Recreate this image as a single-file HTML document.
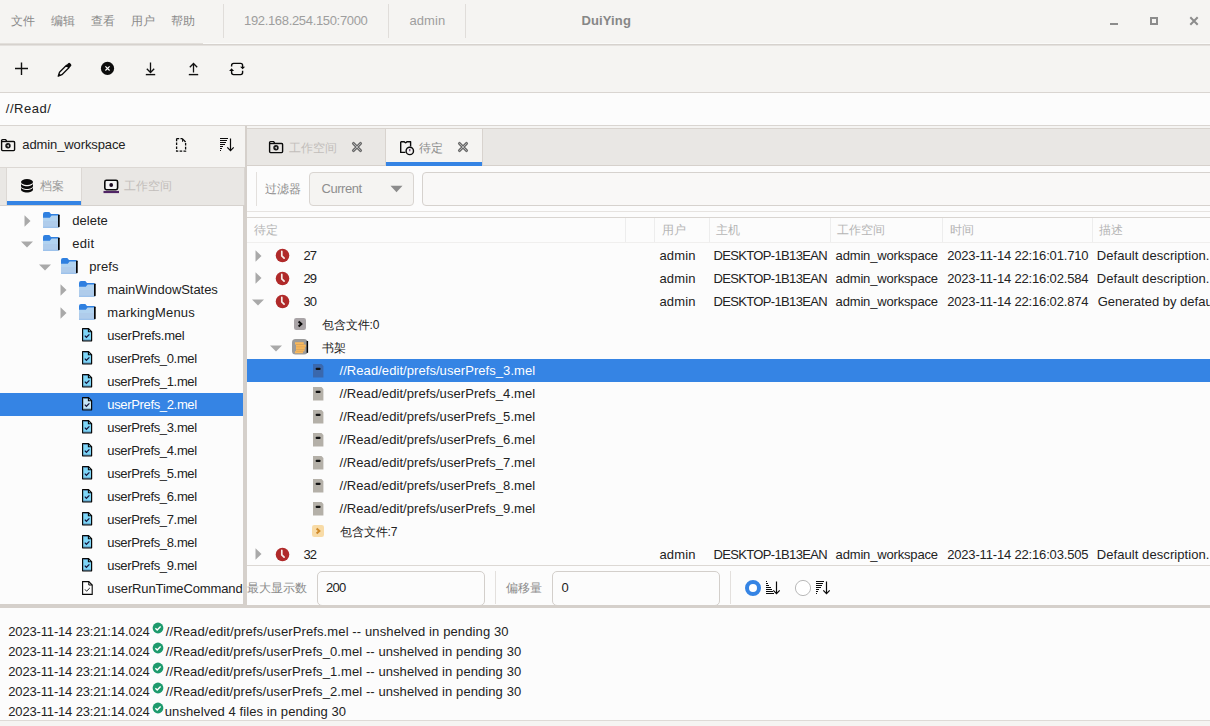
<!DOCTYPE html>
<html><head><meta charset="utf-8"><style>
html,body{margin:0;padding:0;width:1210px;height:726px;overflow:hidden;background:#f5f4f2;font-family:'Liberation Sans',sans-serif;}
.t{position:absolute;white-space:pre;}
svg{overflow:visible}
</style></head><body>
<div style="position:absolute;left:0px;top:0px;width:1210px;height:44px;background:#f5f4f2;"></div><div style="position:absolute;left:0px;top:43px;width:203px;height:1px;background:#e2dfdb;"></div><div style="position:absolute;left:203px;top:43px;width:1007px;height:1px;background:#fafaf9;"></div><div style="position:absolute;left:0px;top:44px;width:1210px;height:1px;background:#d6d2ce;"></div><div style="position:absolute;left:223px;top:4px;width:1px;height:34px;background:#e0ddda;"></div><div style="position:absolute;left:388px;top:4px;width:1px;height:34px;background:#e0ddda;"></div><div style="position:absolute;left:465px;top:4px;width:1px;height:34px;background:#e0ddda;"></div><div style="position:absolute;left:1110px;top:23px;width:8px;height:2px;background:#8c8c8c;"></div><div style="position:absolute;left:1150px;top:17px;width:4px;height:4px;border:2px solid #8c8c8c"></div><svg style="position:absolute;left:1189px;top:16px;" width="10" height="10" viewBox="0 0 10 10"><path d="M1.3 1.3L8.7 8.7M8.7 1.3L1.3 8.7" stroke="#8c8c8c" stroke-width="2"/></svg><div style="position:absolute;left:0px;top:45px;width:1210px;height:47px;background:#f5f4f2;"></div><div style="position:absolute;left:0px;top:45px;width:1210px;height:1px;background:#e4e1de;"></div><div style="position:absolute;left:0px;top:92px;width:1210px;height:1px;background:#d9d5d1;"></div><svg style="position:absolute;left:14px;top:61px;" width="15" height="15" viewBox="0 0 15 15"><path d="M7.5 1.5V14M1 7.5H14" stroke="#111" stroke-width="1.4"/></svg><svg style="position:absolute;left:57px;top:62px;" width="16" height="16" viewBox="0 0 16 16"><path d="M1.2 14.2L2.5 10.3L9.5 3.3L11.9 5.7L4.9 12.7Z" fill="none" stroke="#0a0a0a" stroke-width="1.25" stroke-linejoin="round"/><path d="M9 3.4L11 1.4Q12.1 0.3 13.3 1.4L13.9 2Q15 3.2 13.9 4.3L11.9 6.3Z" fill="#0a0a0a"/><path d="M1.2 14.2L2 11.2L4.2 13.4Z" fill="#0a0a0a"/></svg><svg style="position:absolute;left:100px;top:61px;" width="15" height="15" viewBox="0 0 15 15"><circle cx="7.5" cy="7.4" r="6.6" fill="#0c0c0c"/><path d="M5.4 5.3L9.6 9.5M9.6 5.3L5.4 9.5" stroke="#fff" stroke-width="1.15"/></svg><svg style="position:absolute;left:145px;top:62px;" width="11" height="14" viewBox="0 0 11 14"><path d="M5.5 0.5V10.5M1.8 6.8L5.5 10.5L9.2 6.8" fill="none" stroke="#111" stroke-width="1.3"/><path d="M0.8 12.6H10.2" stroke="#111" stroke-width="1.4"/></svg><svg style="position:absolute;left:188px;top:62px;" width="11" height="14" viewBox="0 0 11 14"><path d="M5.5 10.6V1.5M1.8 5.2L5.5 1.5L9.2 5.2" fill="none" stroke="#111" stroke-width="1.3"/><path d="M0.8 12.6H10.2" stroke="#111" stroke-width="1.4"/></svg><svg style="position:absolute;left:228px;top:61px;" width="18" height="15" viewBox="0 0 18 15"><path d="M3.6 5.6V4.4Q3.6 2.4 5.6 2.4H12.6Q14.6 2.4 14.6 4.4V6M14.6 9.8V11.6Q14.6 13.6 12.6 13.6H5.6Q3.6 13.6 3.6 11.6V9.6" fill="none" stroke="#0a0a0a" stroke-width="1.4"/><path d="M12.1 5.7H17.1L14.6 8.3Z" fill="#0a0a0a"/><path d="M1.1 10.1H6.1L3.6 7.2Z" fill="#0a0a0a"/></svg><div style="position:absolute;left:0px;top:93px;width:1210px;height:32px;background:#fcfcfc;"></div><div style="position:absolute;left:0px;top:125px;width:1210px;height:1px;background:#d9d5d1;"></div><div style="position:absolute;left:0px;top:126px;width:245px;height:41px;background:#f5f4f2;"></div><div style="position:absolute;left:0px;top:167px;width:244px;height:1px;background:#dcd8d4;"></div><div style="position:absolute;left:0px;top:168px;width:244px;height:37px;background:#e9e7e4;"></div><div style="position:absolute;left:6px;top:168px;width:1px;height:37px;background:#dcd8d4;"></div><div style="position:absolute;left:7px;top:168px;width:74px;height:33px;background:#f5f4f2;"></div><div style="position:absolute;left:81px;top:168px;width:1px;height:37px;background:#dcd8d4;"></div><div style="position:absolute;left:7px;top:201px;width:74px;height:4px;background:#3584e4;"></div><div style="position:absolute;left:0px;top:205px;width:244px;height:1px;background:#d6d2ce;"></div><div style="position:absolute;left:0px;top:206px;width:243px;height:398px;background:#fcfcfc;"></div><svg style="position:absolute;left:0px;top:138px;" width="17" height="16" viewBox="0 0 17 16"><path d="M1.6 4.5V2.6Q1.6 1.6 2.6 1.6H5.6L6.8 3.4H13.6Q14.6 3.4 14.6 4.4V11.6Q14.6 12.6 13.6 12.6H2.6Q1.6 12.6 1.6 11.6Z" fill="none" stroke="#0a0a0a" stroke-width="1.4" stroke-linejoin="round"/><path d="M1.6 3.6H14.4" stroke="#0a0a0a" stroke-width="1.2"/><circle cx="8" cy="7.8" r="2.7" fill="#151515"/><path d="M6.6 7.8L8.9 6.4V9.2Z" fill="#cfcfcf"/></svg><svg style="position:absolute;left:175px;top:137px;" width="12" height="16" viewBox="0 0 12 16"><path d="M1.6 1.6H7.2M1.6 1.6V14.2H10.6V5" fill="none" stroke="#0a0a0a" stroke-width="1.3" stroke-dasharray="2.6 1.3"/><path d="M7.2 1.6L10.6 5" fill="none" stroke="#0a0a0a" stroke-width="1.3"/><path d="M7.6 1.6V4.8" stroke="#0a0a0a" stroke-width="1"/></svg><svg style="position:absolute;left:219px;top:137px;" width="16" height="15" viewBox="0 0 16 15"><g fill="#0a0a0a" shape-rendering="crispEdges"><rect x="1" y="1" width="8" height="1"/><rect x="1" y="3" width="7" height="1"/><rect x="1" y="5" width="6" height="1"/><rect x="1" y="7" width="5" height="1"/><rect x="1" y="9" width="3" height="1"/><rect x="1" y="11" width="2" height="1"/><rect x="1" y="13" width="1" height="1"/></g><path d="M11.5 1.6V13.6M8.3 10.4L11.5 13.6L14.7 10.4" fill="none" stroke="#0a0a0a" stroke-width="1.2"/></svg><svg style="position:absolute;left:20px;top:178px;" width="14" height="16" viewBox="0 0 14 16"><ellipse cx="7" cy="4" rx="6" ry="3" fill="#0a0a0a"/><path d="M1 5.3C1 6.96 3.69 8.30 7 8.30C10.31 8.30 13 6.96 13 5.30L13 7.9C13 9.56 10.31 10.90 7 10.90C3.69 10.90 1 9.56 1 7.90Z" fill="#0a0a0a"/><path d="M1 9.0C1 10.66 3.69 12.00 7 12.00C10.31 12.00 13 10.66 13 9.00L13 11.4C13 13.06 10.31 14.40 7 14.40C3.69 14.40 1 13.06 1 11.40Z" fill="#0a0a0a"/></svg><svg style="position:absolute;left:103px;top:178px;" width="17" height="16" viewBox="0 0 17 16"><rect x="1.8" y="2.3" width="12.8" height="9.4" rx="1.6" fill="#f4f4f4" stroke="#0a0a0a" stroke-width="1.6"/><circle cx="8.2" cy="7" r="1.9" fill="#1a0a20"/><rect x="0.5" y="12.9" width="15.5" height="2.2" fill="#502565"/></svg><svg style="position:absolute;left:24px;top:215px;" width="7" height="12" viewBox="0 0 7 12"><path d="M0.5 0.3L6.5 6L0.5 11.7Z" fill="#a9a9a9"/></svg><svg style="position:absolute;left:43px;top:212px;" width="17" height="16" viewBox="0 0 17 16"><rect x="0" y="3" width="15.5" height="12.6" fill="#b2d3f0"/><rect x="0" y="9" width="15.5" height="6.6" fill="#aecbea" opacity="0.8"/><path d="M0 2Q0 0 2 0H6.3L8 2.1H15.5V3.5H8.6L6.8 5.8H0Z" fill="#2f80e0"/><rect x="0" y="14.8" width="15.5" height="0.9" fill="#8fb9e8"/><rect x="15" y="2.6" width="1.7" height="12.6" rx="0.7" fill="#050505"/></svg><svg style="position:absolute;left:21px;top:241px;" width="12" height="7" viewBox="0 0 12 7"><path d="M0 0.5H12L6 6.5Z" fill="#a9a9a9"/></svg><svg style="position:absolute;left:43px;top:235px;" width="17" height="16" viewBox="0 0 17 16"><rect x="0" y="3" width="15.5" height="12.6" fill="#b2d3f0"/><rect x="0" y="9" width="15.5" height="6.6" fill="#aecbea" opacity="0.8"/><path d="M0 2Q0 0 2 0H6.3L8 2.1H15.5V3.5H8.6L6.8 5.8H0Z" fill="#2f80e0"/><rect x="0" y="14.8" width="15.5" height="0.9" fill="#8fb9e8"/><rect x="15" y="2.6" width="1.7" height="12.6" rx="0.7" fill="#050505"/></svg><svg style="position:absolute;left:39px;top:264px;" width="12" height="7" viewBox="0 0 12 7"><path d="M0 0.5H12L6 6.5Z" fill="#a9a9a9"/></svg><svg style="position:absolute;left:61px;top:258px;" width="17" height="16" viewBox="0 0 17 16"><rect x="0" y="3" width="15.5" height="12.6" fill="#b2d3f0"/><rect x="0" y="9" width="15.5" height="6.6" fill="#aecbea" opacity="0.8"/><path d="M0 2Q0 0 2 0H6.3L8 2.1H15.5V3.5H8.6L6.8 5.8H0Z" fill="#2f80e0"/><rect x="0" y="14.8" width="15.5" height="0.9" fill="#8fb9e8"/><rect x="15" y="2.6" width="1.7" height="12.6" rx="0.7" fill="#050505"/></svg><svg style="position:absolute;left:60px;top:284px;" width="7" height="12" viewBox="0 0 7 12"><path d="M0.5 0.3L6.5 6L0.5 11.7Z" fill="#a9a9a9"/></svg><svg style="position:absolute;left:79px;top:281px;" width="17" height="16" viewBox="0 0 17 16"><rect x="0" y="3" width="15.5" height="12.6" fill="#b2d3f0"/><rect x="0" y="9" width="15.5" height="6.6" fill="#aecbea" opacity="0.8"/><path d="M0 2Q0 0 2 0H6.3L8 2.1H15.5V3.5H8.6L6.8 5.8H0Z" fill="#2f80e0"/><rect x="0" y="14.8" width="15.5" height="0.9" fill="#8fb9e8"/><rect x="15" y="2.6" width="1.7" height="12.6" rx="0.7" fill="#050505"/></svg><svg style="position:absolute;left:60px;top:307px;" width="7" height="12" viewBox="0 0 7 12"><path d="M0.5 0.3L6.5 6L0.5 11.7Z" fill="#a9a9a9"/></svg><svg style="position:absolute;left:79px;top:304px;" width="17" height="16" viewBox="0 0 17 16"><rect x="0" y="3" width="15.5" height="12.6" fill="#b2d3f0"/><rect x="0" y="9" width="15.5" height="6.6" fill="#aecbea" opacity="0.8"/><path d="M0 2Q0 0 2 0H6.3L8 2.1H15.5V3.5H8.6L6.8 5.8H0Z" fill="#2f80e0"/><rect x="0" y="14.8" width="15.5" height="0.9" fill="#8fb9e8"/><rect x="15" y="2.6" width="1.7" height="12.6" rx="0.7" fill="#050505"/></svg><svg style="position:absolute;left:82px;top:328px;" width="11" height="14" viewBox="0 0 11 14"><path d="M0.6 0.6H6.6L9.6 3.6V12.8H0.6Z" fill="#7ed6f8" stroke="#080808" stroke-width="1.2" stroke-linejoin="round"/><rect x="1.2" y="1.2" width="5" height="0.8" fill="#4d7fa6"/><rect x="1.2" y="11.6" width="7.8" height="0.7" fill="#4d7fa6"/><path d="M6.4 0.8V3.8H9.4" fill="none" stroke="#080808" stroke-width="1.1"/><path d="M2.8 7.6L4.4 9.3L7.4 6.4" fill="none" stroke="#15153a" stroke-width="1.2"/></svg><svg style="position:absolute;left:82px;top:351px;" width="11" height="14" viewBox="0 0 11 14"><path d="M0.6 0.6H6.6L9.6 3.6V12.8H0.6Z" fill="#7ed6f8" stroke="#080808" stroke-width="1.2" stroke-linejoin="round"/><rect x="1.2" y="1.2" width="5" height="0.8" fill="#4d7fa6"/><rect x="1.2" y="11.6" width="7.8" height="0.7" fill="#4d7fa6"/><path d="M6.4 0.8V3.8H9.4" fill="none" stroke="#080808" stroke-width="1.1"/><path d="M2.8 7.6L4.4 9.3L7.4 6.4" fill="none" stroke="#15153a" stroke-width="1.2"/></svg><svg style="position:absolute;left:82px;top:374px;" width="11" height="14" viewBox="0 0 11 14"><path d="M0.6 0.6H6.6L9.6 3.6V12.8H0.6Z" fill="#7ed6f8" stroke="#080808" stroke-width="1.2" stroke-linejoin="round"/><rect x="1.2" y="1.2" width="5" height="0.8" fill="#4d7fa6"/><rect x="1.2" y="11.6" width="7.8" height="0.7" fill="#4d7fa6"/><path d="M6.4 0.8V3.8H9.4" fill="none" stroke="#080808" stroke-width="1.1"/><path d="M2.8 7.6L4.4 9.3L7.4 6.4" fill="none" stroke="#15153a" stroke-width="1.2"/></svg><div style="position:absolute;left:0px;top:393px;width:243px;height:23px;background:#3584e4;"></div><svg style="position:absolute;left:82px;top:397px;" width="11" height="14" viewBox="0 0 11 14"><path d="M0.6 0.6H6.6L9.6 3.6V12.8H0.6Z" fill="#c6e6f6" stroke="#080808" stroke-width="1.2" stroke-linejoin="round"/><rect x="1.2" y="1.2" width="5" height="0.8" fill="#4d7fa6"/><rect x="1.2" y="11.6" width="7.8" height="0.7" fill="#4d7fa6"/><path d="M6.4 0.8V3.8H9.4" fill="none" stroke="#080808" stroke-width="1.1"/><path d="M2.8 7.6L4.4 9.3L7.4 6.4" fill="none" stroke="#15153a" stroke-width="1.2"/></svg><svg style="position:absolute;left:82px;top:420px;" width="11" height="14" viewBox="0 0 11 14"><path d="M0.6 0.6H6.6L9.6 3.6V12.8H0.6Z" fill="#7ed6f8" stroke="#080808" stroke-width="1.2" stroke-linejoin="round"/><rect x="1.2" y="1.2" width="5" height="0.8" fill="#4d7fa6"/><rect x="1.2" y="11.6" width="7.8" height="0.7" fill="#4d7fa6"/><path d="M6.4 0.8V3.8H9.4" fill="none" stroke="#080808" stroke-width="1.1"/><path d="M2.8 7.6L4.4 9.3L7.4 6.4" fill="none" stroke="#15153a" stroke-width="1.2"/></svg><svg style="position:absolute;left:82px;top:443px;" width="11" height="14" viewBox="0 0 11 14"><path d="M0.6 0.6H6.6L9.6 3.6V12.8H0.6Z" fill="#7ed6f8" stroke="#080808" stroke-width="1.2" stroke-linejoin="round"/><rect x="1.2" y="1.2" width="5" height="0.8" fill="#4d7fa6"/><rect x="1.2" y="11.6" width="7.8" height="0.7" fill="#4d7fa6"/><path d="M6.4 0.8V3.8H9.4" fill="none" stroke="#080808" stroke-width="1.1"/><path d="M2.8 7.6L4.4 9.3L7.4 6.4" fill="none" stroke="#15153a" stroke-width="1.2"/></svg><svg style="position:absolute;left:82px;top:466px;" width="11" height="14" viewBox="0 0 11 14"><path d="M0.6 0.6H6.6L9.6 3.6V12.8H0.6Z" fill="#7ed6f8" stroke="#080808" stroke-width="1.2" stroke-linejoin="round"/><rect x="1.2" y="1.2" width="5" height="0.8" fill="#4d7fa6"/><rect x="1.2" y="11.6" width="7.8" height="0.7" fill="#4d7fa6"/><path d="M6.4 0.8V3.8H9.4" fill="none" stroke="#080808" stroke-width="1.1"/><path d="M2.8 7.6L4.4 9.3L7.4 6.4" fill="none" stroke="#15153a" stroke-width="1.2"/></svg><svg style="position:absolute;left:82px;top:489px;" width="11" height="14" viewBox="0 0 11 14"><path d="M0.6 0.6H6.6L9.6 3.6V12.8H0.6Z" fill="#7ed6f8" stroke="#080808" stroke-width="1.2" stroke-linejoin="round"/><rect x="1.2" y="1.2" width="5" height="0.8" fill="#4d7fa6"/><rect x="1.2" y="11.6" width="7.8" height="0.7" fill="#4d7fa6"/><path d="M6.4 0.8V3.8H9.4" fill="none" stroke="#080808" stroke-width="1.1"/><path d="M2.8 7.6L4.4 9.3L7.4 6.4" fill="none" stroke="#15153a" stroke-width="1.2"/></svg><svg style="position:absolute;left:82px;top:512px;" width="11" height="14" viewBox="0 0 11 14"><path d="M0.6 0.6H6.6L9.6 3.6V12.8H0.6Z" fill="#7ed6f8" stroke="#080808" stroke-width="1.2" stroke-linejoin="round"/><rect x="1.2" y="1.2" width="5" height="0.8" fill="#4d7fa6"/><rect x="1.2" y="11.6" width="7.8" height="0.7" fill="#4d7fa6"/><path d="M6.4 0.8V3.8H9.4" fill="none" stroke="#080808" stroke-width="1.1"/><path d="M2.8 7.6L4.4 9.3L7.4 6.4" fill="none" stroke="#15153a" stroke-width="1.2"/></svg><svg style="position:absolute;left:82px;top:535px;" width="11" height="14" viewBox="0 0 11 14"><path d="M0.6 0.6H6.6L9.6 3.6V12.8H0.6Z" fill="#7ed6f8" stroke="#080808" stroke-width="1.2" stroke-linejoin="round"/><rect x="1.2" y="1.2" width="5" height="0.8" fill="#4d7fa6"/><rect x="1.2" y="11.6" width="7.8" height="0.7" fill="#4d7fa6"/><path d="M6.4 0.8V3.8H9.4" fill="none" stroke="#080808" stroke-width="1.1"/><path d="M2.8 7.6L4.4 9.3L7.4 6.4" fill="none" stroke="#15153a" stroke-width="1.2"/></svg><svg style="position:absolute;left:82px;top:558px;" width="11" height="14" viewBox="0 0 11 14"><path d="M0.6 0.6H6.6L9.6 3.6V12.8H0.6Z" fill="#7ed6f8" stroke="#080808" stroke-width="1.2" stroke-linejoin="round"/><rect x="1.2" y="1.2" width="5" height="0.8" fill="#4d7fa6"/><rect x="1.2" y="11.6" width="7.8" height="0.7" fill="#4d7fa6"/><path d="M6.4 0.8V3.8H9.4" fill="none" stroke="#080808" stroke-width="1.1"/><path d="M2.8 7.6L4.4 9.3L7.4 6.4" fill="none" stroke="#15153a" stroke-width="1.2"/></svg><svg style="position:absolute;left:82px;top:581px;" width="11" height="14" viewBox="0 0 11 14"><path d="M0.6 0.6H6.8L10.2 4V13.4H0.6Z" fill="#fff" stroke="#080808" stroke-width="1.1"/><path d="M6.8 0.6V4H10.2" fill="none" stroke="#080808" stroke-width="1"/><path d="M3 8.4L4.6 10.2L7.8 7" fill="none" stroke="#222" stroke-width="1"/></svg><div style="position:absolute;left:243px;top:205px;width:4px;height:399px;background:#d5d0cb;"></div><div style="position:absolute;left:245px;top:126px;width:2px;height:79px;background:#d5d0cb;"></div><div style="position:absolute;left:244px;top:167px;width:1px;height:38px;background:#d9d5d1;"></div><div style="position:absolute;left:247px;top:126px;width:963px;height:2px;background:#f5f4f2;"></div><div style="position:absolute;left:247px;top:128px;width:963px;height:1px;background:#d8d3ce;"></div><div style="position:absolute;left:247px;top:129px;width:963px;height:36px;background:#e9e7e4;"></div><div style="position:absolute;left:247px;top:165px;width:963px;height:1px;background:#d6d1cc;"></div><div style="position:absolute;left:385px;top:129px;width:1px;height:36px;background:#d8d3ce;"></div><div style="position:absolute;left:386px;top:129px;width:96px;height:33px;background:#f5f4f2;"></div><div style="position:absolute;left:482px;top:129px;width:1px;height:36px;background:#d8d3ce;"></div><div style="position:absolute;left:386px;top:162px;width:96px;height:4px;background:#3584e4;"></div><svg style="position:absolute;left:268px;top:140px;" width="17" height="16" viewBox="0 0 17 16"><path d="M1.6 4.5V2.6Q1.6 1.6 2.6 1.6H5.6L6.8 3.4H13.6Q14.6 3.4 14.6 4.4V11.6Q14.6 12.6 13.6 12.6H2.6Q1.6 12.6 1.6 11.6Z" fill="none" stroke="#0a0a0a" stroke-width="1.4" stroke-linejoin="round"/><path d="M1.6 3.6H14.4" stroke="#0a0a0a" stroke-width="1.2"/><circle cx="8" cy="7.8" r="2.7" fill="#151515"/><path d="M6.6 7.8L8.9 6.4V9.2Z" fill="#cfcfcf"/></svg><svg style="position:absolute;left:351px;top:141px;" width="12" height="12" viewBox="0 0 12 12"><path d="M2.5 2.5L9.5 9.5M9.5 2.5L2.5 9.5" stroke="#6a6a6a" stroke-width="3.1" stroke-linecap="round"/><path d="M2.6 2.6L9.4 9.4M9.4 2.6L2.6 9.4" stroke="#b4b4b4" stroke-width="1" stroke-linecap="round"/></svg><svg style="position:absolute;left:399px;top:140px;" width="17" height="17" viewBox="0 0 17 17"><path d="M1.7 1.7H5.2Q6.6 3.9 8 1.7H11.6V6.4M6.4 12.4H1.7V1.7" fill="none" stroke="#0a0a0a" stroke-width="1.4" stroke-linejoin="round"/><circle cx="10.8" cy="10.9" r="3.7" fill="#f5f4f2" stroke="#0a0a0a" stroke-width="1.4"/><path d="M10.8 8.9V11.2" stroke="#4a2060" stroke-width="1.1"/></svg><svg style="position:absolute;left:457px;top:141px;" width="12" height="12" viewBox="0 0 12 12"><path d="M2.5 2.5L9.5 9.5M9.5 2.5L2.5 9.5" stroke="#6a6a6a" stroke-width="3.1" stroke-linecap="round"/><path d="M2.6 2.6L9.4 9.4M9.4 2.6L2.6 9.4" stroke="#b4b4b4" stroke-width="1" stroke-linecap="round"/></svg><div style="position:absolute;left:247px;top:166px;width:963px;height:45px;background:#fcfcfc;"></div><div style="position:absolute;left:256px;top:172px;width:1px;height:34px;background:#e3e0dd;"></div><div style="position:absolute;left:309px;top:172px;width:103px;height:32px;border:1px solid #d9d5d1;border-radius:4px;background:#f5f4f2"></div><svg style="position:absolute;left:389.5px;top:185px;" width="13" height="8" viewBox="0 0 13 8"><path d="M0.5 0.8H12.5L6.5 7.2Z" fill="#8c8c8c"/></svg><div style="position:absolute;left:422px;top:172px;width:800px;height:32px;border:1px solid #d6d2ce;border-radius:4px;background:#f9f8f7"></div><div style="position:absolute;left:247px;top:211px;width:963px;height:1px;background:#e6e3e0;"></div><div style="position:absolute;left:247px;top:212px;width:963px;height:5px;background:#fcfcfc;"></div><div style="position:absolute;left:247px;top:217px;width:963px;height:1px;background:#d9d5d1;"></div><div style="position:absolute;left:247px;top:218px;width:963px;height:25px;background:#fcfcfc;"></div><div style="position:absolute;left:625px;top:218px;width:1px;height:24px;background:#ededed;"></div><div style="position:absolute;left:654px;top:218px;width:1px;height:24px;background:#ededed;"></div><div style="position:absolute;left:709px;top:218px;width:1px;height:24px;background:#ededed;"></div><div style="position:absolute;left:830px;top:218px;width:1px;height:24px;background:#ededed;"></div><div style="position:absolute;left:942px;top:218px;width:1px;height:24px;background:#ededed;"></div><div style="position:absolute;left:1092px;top:218px;width:1px;height:24px;background:#ededed;"></div><div style="position:absolute;left:247px;top:242px;width:963px;height:1px;background:#f0efee;"></div><div style="position:absolute;left:247px;top:243px;width:963px;height:322px;background:#fcfcfc;"></div><svg style="position:absolute;left:255px;top:250px;" width="7" height="12" viewBox="0 0 7 12"><path d="M0.5 0.3L6.5 6L0.5 11.7Z" fill="#a9a9a9"/></svg><svg style="position:absolute;left:274.5px;top:248.0px;" width="15" height="15" viewBox="0 0 15 15"><circle cx="7.5" cy="7.5" r="6.8" fill="#b02a2a"/><path d="M6.8 3.4V7.8L9.1 10.2" fill="none" stroke="#f6eeea" stroke-width="1.7" stroke-linecap="round"/></svg><svg style="position:absolute;left:255px;top:272px;" width="7" height="12" viewBox="0 0 7 12"><path d="M0.5 0.3L6.5 6L0.5 11.7Z" fill="#a9a9a9"/></svg><svg style="position:absolute;left:274.5px;top:271.0px;" width="15" height="15" viewBox="0 0 15 15"><circle cx="7.5" cy="7.5" r="6.8" fill="#b02a2a"/><path d="M6.8 3.4V7.8L9.1 10.2" fill="none" stroke="#f6eeea" stroke-width="1.7" stroke-linecap="round"/></svg><svg style="position:absolute;left:252px;top:299px;" width="12" height="7" viewBox="0 0 12 7"><path d="M0 0.5H12L6 6.5Z" fill="#a9a9a9"/></svg><svg style="position:absolute;left:274.5px;top:294.0px;" width="15" height="15" viewBox="0 0 15 15"><circle cx="7.5" cy="7.5" r="6.8" fill="#b02a2a"/><path d="M6.8 3.4V7.8L9.1 10.2" fill="none" stroke="#f6eeea" stroke-width="1.7" stroke-linecap="round"/></svg><svg style="position:absolute;left:294px;top:318px;" width="12" height="12" viewBox="0 0 12 12"><rect x="0" y="0" width="12" height="12" rx="2.2" fill="#a9a4a7"/><path d="M4.6 3.4L7.4 6L4.6 8.6" fill="none" stroke="#0a0a0a" stroke-width="2"/></svg><svg style="position:absolute;left:270px;top:345px;" width="12" height="7" viewBox="0 0 12 7"><path d="M0 0.5H12L6 6.5Z" fill="#a9a9a9"/></svg><svg style="position:absolute;left:292px;top:339px;" width="17" height="16" viewBox="0 0 17 16"><rect x="0" y="0" width="15.6" height="15.6" rx="3.6" fill="#9b9b9b"/><rect x="14.6" y="2" width="1.5" height="11.8" fill="#050505"/><g fill="#f8b85c"><rect x="3" y="3.2" width="8.8" height="2.3"/><rect x="4" y="5.6" width="9.8" height="2.3"/><rect x="4" y="8" width="8.8" height="2.3"/><rect x="4" y="10.4" width="8.4" height="2"/><rect x="3" y="12.2" width="8" height="2"/></g><path d="M4 5.5H11.6M4.4 7.9H13.4M4.4 10.3H12.4M4.4 12.3H11.4" stroke="#dc9c48" stroke-width="0.5"/></svg><div style="position:absolute;left:247px;top:359px;width:963px;height:23px;background:#3584e4;"></div><svg style="position:absolute;left:313px;top:364px;" width="11" height="14" viewBox="0 0 11 14"><path d="M0 0H8.5L10.4 1.9V13.6H0Z" fill="#3a68ad"/><rect x="2.6" y="3.8" width="5" height="2.2" rx="1" fill="#111"/></svg><svg style="position:absolute;left:313px;top:387px;" width="11" height="14" viewBox="0 0 11 14"><path d="M0 0H8.5L10.4 1.9V13.6H0Z" fill="#b4b0a8"/><rect x="2.6" y="3.8" width="5" height="2.2" rx="1" fill="#111"/></svg><svg style="position:absolute;left:313px;top:410px;" width="11" height="14" viewBox="0 0 11 14"><path d="M0 0H8.5L10.4 1.9V13.6H0Z" fill="#b4b0a8"/><rect x="2.6" y="3.8" width="5" height="2.2" rx="1" fill="#111"/></svg><svg style="position:absolute;left:313px;top:433px;" width="11" height="14" viewBox="0 0 11 14"><path d="M0 0H8.5L10.4 1.9V13.6H0Z" fill="#b4b0a8"/><rect x="2.6" y="3.8" width="5" height="2.2" rx="1" fill="#111"/></svg><svg style="position:absolute;left:313px;top:456px;" width="11" height="14" viewBox="0 0 11 14"><path d="M0 0H8.5L10.4 1.9V13.6H0Z" fill="#b4b0a8"/><rect x="2.6" y="3.8" width="5" height="2.2" rx="1" fill="#111"/></svg><svg style="position:absolute;left:313px;top:479px;" width="11" height="14" viewBox="0 0 11 14"><path d="M0 0H8.5L10.4 1.9V13.6H0Z" fill="#b4b0a8"/><rect x="2.6" y="3.8" width="5" height="2.2" rx="1" fill="#111"/></svg><svg style="position:absolute;left:313px;top:502px;" width="11" height="14" viewBox="0 0 11 14"><path d="M0 0H8.5L10.4 1.9V13.6H0Z" fill="#b4b0a8"/><rect x="2.6" y="3.8" width="5" height="2.2" rx="1" fill="#111"/></svg><svg style="position:absolute;left:312px;top:525px;" width="12" height="12" viewBox="0 0 12 12"><rect x="0" y="0" width="12" height="12" rx="2.2" fill="#f8dba6"/><path d="M4.6 3.4L7.4 6L4.6 8.6" fill="none" stroke="#d08a2a" stroke-width="2"/></svg><svg style="position:absolute;left:255px;top:548px;" width="7" height="12" viewBox="0 0 7 12"><path d="M0.5 0.3L6.5 6L0.5 11.7Z" fill="#a9a9a9"/></svg><svg style="position:absolute;left:274.5px;top:547.0px;" width="15" height="15" viewBox="0 0 15 15"><circle cx="7.5" cy="7.5" r="6.8" fill="#b02a2a"/><path d="M6.8 3.4V7.8L9.1 10.2" fill="none" stroke="#f6eeea" stroke-width="1.7" stroke-linecap="round"/></svg><div style="position:absolute;left:247px;top:565px;width:963px;height:1px;background:#dcd8d4;"></div><div style="position:absolute;left:247px;top:566px;width:963px;height:39px;background:#fcfcfc;"></div><div style="position:absolute;left:317px;top:571px;width:166px;height:33px;border:1px solid #d3cfcb;border-radius:5px;background:#fcfcfc"></div><div style="position:absolute;left:495px;top:571px;width:1px;height:33px;background:#e3e0dd;"></div><div style="position:absolute;left:552px;top:571px;width:166px;height:33px;border:1px solid #d3cfcb;border-radius:5px;background:#fcfcfc"></div><div style="position:absolute;left:730px;top:571px;width:1px;height:33px;background:#e3e0dd;"></div><svg style="position:absolute;left:744px;top:579px;" width="18" height="18" viewBox="0 0 18 18"><circle cx="9" cy="9" r="6" fill="#fff" stroke="#3584e4" stroke-width="4"/></svg><svg style="position:absolute;left:765px;top:580px;" width="16" height="15" viewBox="0 0 16 15"><g fill="#0a0a0a" shape-rendering="crispEdges"><rect x="1" y="1" width="1" height="1"/><rect x="1" y="3" width="2" height="1"/><rect x="1" y="5" width="3" height="1"/><rect x="1" y="7" width="5" height="1"/><rect x="1" y="9" width="6" height="1"/><rect x="1" y="11" width="7" height="1"/><rect x="1" y="13" width="8" height="1"/></g><path d="M11.5 1.6V13.6M8.3 10.4L11.5 13.6L14.7 10.4" fill="none" stroke="#0a0a0a" stroke-width="1.2"/></svg><svg style="position:absolute;left:794px;top:579px;" width="18" height="18" viewBox="0 0 18 18"><circle cx="9" cy="9" r="7.6" fill="#fff" stroke="#b9b9b9" stroke-width="1"/></svg><svg style="position:absolute;left:815px;top:580px;" width="16" height="15" viewBox="0 0 16 15"><g fill="#0a0a0a" shape-rendering="crispEdges"><rect x="1" y="1" width="8" height="1"/><rect x="1" y="3" width="7" height="1"/><rect x="1" y="5" width="6" height="1"/><rect x="1" y="7" width="5" height="1"/><rect x="1" y="9" width="3" height="1"/><rect x="1" y="11" width="2" height="1"/><rect x="1" y="13" width="1" height="1"/></g><path d="M11.5 1.6V13.6M8.3 10.4L11.5 13.6L14.7 10.4" fill="none" stroke="#0a0a0a" stroke-width="1.2"/></svg><div style="position:absolute;left:0px;top:604px;width:247px;height:4px;background:#d5d0cb;"></div><div style="position:absolute;left:247px;top:605px;width:963px;height:3px;background:#d5d0cb;"></div><div style="position:absolute;left:0px;top:608px;width:1210px;height:112px;background:#fcfcfc;"></div><div style="position:absolute;left:0px;top:720px;width:1210px;height:1px;background:#dedad6;"></div><div style="position:absolute;left:0px;top:721px;width:1210px;height:5px;background:#f5f4f2;"></div><svg style="position:absolute;left:152px;top:622px;" width="12" height="12" viewBox="0 0 12 12"><circle cx="6" cy="6" r="5.4" fill="#1d9a6c"/><path d="M3.4 6.2L5.2 7.9L8.6 4.5" fill="none" stroke="#fff" stroke-width="1.4"/></svg><svg style="position:absolute;left:152px;top:642px;" width="12" height="12" viewBox="0 0 12 12"><circle cx="6" cy="6" r="5.4" fill="#1d9a6c"/><path d="M3.4 6.2L5.2 7.9L8.6 4.5" fill="none" stroke="#fff" stroke-width="1.4"/></svg><svg style="position:absolute;left:152px;top:662px;" width="12" height="12" viewBox="0 0 12 12"><circle cx="6" cy="6" r="5.4" fill="#1d9a6c"/><path d="M3.4 6.2L5.2 7.9L8.6 4.5" fill="none" stroke="#fff" stroke-width="1.4"/></svg><svg style="position:absolute;left:152px;top:682px;" width="12" height="12" viewBox="0 0 12 12"><circle cx="6" cy="6" r="5.4" fill="#1d9a6c"/><path d="M3.4 6.2L5.2 7.9L8.6 4.5" fill="none" stroke="#fff" stroke-width="1.4"/></svg><svg style="position:absolute;left:152px;top:702px;" width="12" height="12" viewBox="0 0 12 12"><circle cx="6" cy="6" r="5.4" fill="#1d9a6c"/><path d="M3.4 6.2L5.2 7.9L8.6 4.5" fill="none" stroke="#fff" stroke-width="1.4"/></svg>
<div class="t" style="left:11.00px;top:15px;font-size:12px;line-height:12px;color:#8a8a8a">文件</div><div class="t" style="left:51.00px;top:15px;font-size:12px;line-height:12px;color:#8a8a8a">编辑</div><div class="t" style="left:91.00px;top:15px;font-size:12px;line-height:12px;color:#8a8a8a">查看</div><div class="t" style="left:131.00px;top:15px;font-size:12px;line-height:12px;color:#8a8a8a">用户</div><div class="t" style="left:171.00px;top:15px;font-size:12px;line-height:12px;color:#8a8a8a">帮助</div><div class="t" style="left:244.00px;top:14px;font-size:13px;line-height:13px;color:#9e9e9e;letter-spacing:-0.332px">192.168.254.150:7000</div><div class="t" style="left:409.40px;top:14px;font-size:13px;line-height:13px;color:#9e9e9e;letter-spacing:0.100px">admin</div><div class="t" style="left:581.60px;top:14px;font-size:13px;line-height:13px;color:#878787;font-weight:bold;letter-spacing:0.100px">DuiYing</div><div class="t" style="left:5.80px;top:102px;font-size:13px;line-height:13px;color:#222222;letter-spacing:0.533px">//Read/</div><div class="t" style="left:22.30px;top:138px;font-size:13px;line-height:13px;color:#222222;letter-spacing:-0.107px">admin_workspace</div><div class="t" style="left:40.00px;top:180px;font-size:12px;line-height:12px;color:#9a9a9a">档案</div><div class="t" style="left:124.00px;top:180px;font-size:12px;line-height:12px;color:#c2bebb">工作空间</div><div class="t" style="left:72.30px;top:214px;font-size:13px;line-height:13px;color:#222222;letter-spacing:0.020px;width:170.70px;overflow:hidden;padding-bottom:4px">delete</div><div class="t" style="left:72.30px;top:237px;font-size:13px;line-height:13px;color:#222222;letter-spacing:0.267px;width:170.70px;overflow:hidden;padding-bottom:4px">edit</div><div class="t" style="left:89.30px;top:260px;font-size:13px;line-height:13px;color:#222222;letter-spacing:0.075px;width:153.70px;overflow:hidden;padding-bottom:4px">prefs</div><div class="t" style="left:107.30px;top:283px;font-size:13px;line-height:13px;color:#222222;letter-spacing:-0.047px;width:135.70px;overflow:hidden;padding-bottom:4px">mainWindowStates</div><div class="t" style="left:107.30px;top:306px;font-size:13px;line-height:13px;color:#222222;letter-spacing:0.200px;width:135.70px;overflow:hidden;padding-bottom:4px">markingMenus</div><div class="t" style="left:107.30px;top:329px;font-size:13px;line-height:13px;color:#222222;letter-spacing:-0.233px;width:135.70px;overflow:hidden;padding-bottom:4px">userPrefs.mel</div><div class="t" style="left:107.30px;top:352px;font-size:13px;line-height:13px;color:#222222;letter-spacing:-0.343px;width:135.70px;overflow:hidden;padding-bottom:4px">userPrefs_0.mel</div><div class="t" style="left:107.30px;top:375px;font-size:13px;line-height:13px;color:#222222;letter-spacing:-0.343px;width:135.70px;overflow:hidden;padding-bottom:4px">userPrefs_1.mel</div><div class="t" style="left:107.30px;top:398px;font-size:13px;line-height:13px;color:#fff;letter-spacing:-0.343px;width:135.70px;overflow:hidden;padding-bottom:4px">userPrefs_2.mel</div><div class="t" style="left:107.30px;top:421px;font-size:13px;line-height:13px;color:#222222;letter-spacing:-0.343px;width:135.70px;overflow:hidden;padding-bottom:4px">userPrefs_3.mel</div><div class="t" style="left:107.30px;top:444px;font-size:13px;line-height:13px;color:#222222;letter-spacing:-0.343px;width:135.70px;overflow:hidden;padding-bottom:4px">userPrefs_4.mel</div><div class="t" style="left:107.30px;top:467px;font-size:13px;line-height:13px;color:#222222;letter-spacing:-0.343px;width:135.70px;overflow:hidden;padding-bottom:4px">userPrefs_5.mel</div><div class="t" style="left:107.30px;top:490px;font-size:13px;line-height:13px;color:#222222;letter-spacing:-0.343px;width:135.70px;overflow:hidden;padding-bottom:4px">userPrefs_6.mel</div><div class="t" style="left:107.30px;top:513px;font-size:13px;line-height:13px;color:#222222;letter-spacing:-0.343px;width:135.70px;overflow:hidden;padding-bottom:4px">userPrefs_7.mel</div><div class="t" style="left:107.30px;top:536px;font-size:13px;line-height:13px;color:#222222;letter-spacing:-0.343px;width:135.70px;overflow:hidden;padding-bottom:4px">userPrefs_8.mel</div><div class="t" style="left:107.30px;top:559px;font-size:13px;line-height:13px;color:#222222;letter-spacing:-0.343px;width:135.70px;overflow:hidden;padding-bottom:4px">userPrefs_9.mel</div><div class="t" style="left:107.30px;top:582px;font-size:13px;line-height:13px;color:#222222;letter-spacing:-0.124px;width:135.70px;overflow:hidden;padding-bottom:4px">userRunTimeCommand</div><div class="t" style="left:289.00px;top:142px;font-size:12px;line-height:12px;color:#c2bebb">工作空间</div><div class="t" style="left:419.00px;top:142px;font-size:12px;line-height:12px;color:#8c8c8c">待定</div><div class="t" style="left:265.00px;top:183px;font-size:12px;line-height:12px;color:#8c8c8c">过滤器</div><div class="t" style="left:321.50px;top:182px;font-size:13px;line-height:13px;color:#8e8e8e;letter-spacing:-0.467px">Current</div><div class="t" style="left:254.00px;top:224px;font-size:12px;line-height:12px;color:#b5b5b5">待定</div><div class="t" style="left:661.50px;top:224px;font-size:12px;line-height:12px;color:#b5b5b5">用户</div><div class="t" style="left:716.00px;top:224px;font-size:12px;line-height:12px;color:#b5b5b5">主机</div><div class="t" style="left:837.00px;top:224px;font-size:12px;line-height:12px;color:#b5b5b5">工作空间</div><div class="t" style="left:949.50px;top:224px;font-size:12px;line-height:12px;color:#b5b5b5">时间</div><div class="t" style="left:1099.00px;top:224px;font-size:12px;line-height:12px;color:#b5b5b5">描述</div><div class="t" style="left:303.50px;top:249px;font-size:13px;line-height:13px;color:#222222;letter-spacing:-1.100px">27</div><div class="t" style="left:659.50px;top:249px;font-size:13px;line-height:13px;color:#222222;letter-spacing:0.125px">admin</div><div class="t" style="left:713.40px;top:249px;font-size:13px;line-height:13px;color:#222222;letter-spacing:-0.643px">DESKTOP-1B13EAN</div><div class="t" style="left:835.60px;top:249px;font-size:13px;line-height:13px;color:#222222;letter-spacing:-0.164px">admin_workspace</div><div class="t" style="left:947.20px;top:249px;font-size:13px;line-height:13px;color:#222222;letter-spacing:-0.168px">2023-11-14 22:16:01.710</div><div class="t" style="left:1096.70px;top:249px;font-size:13px;line-height:13px;color:#222222;letter-spacing:0.079px">Default description.</div><div class="t" style="left:303.50px;top:272px;font-size:13px;line-height:13px;color:#222222;letter-spacing:-1.100px">29</div><div class="t" style="left:659.50px;top:272px;font-size:13px;line-height:13px;color:#222222;letter-spacing:0.125px">admin</div><div class="t" style="left:713.40px;top:272px;font-size:13px;line-height:13px;color:#222222;letter-spacing:-0.643px">DESKTOP-1B13EAN</div><div class="t" style="left:835.60px;top:272px;font-size:13px;line-height:13px;color:#222222;letter-spacing:-0.164px">admin_workspace</div><div class="t" style="left:947.20px;top:272px;font-size:13px;line-height:13px;color:#222222;letter-spacing:-0.168px">2023-11-14 22:16:02.584</div><div class="t" style="left:1096.70px;top:272px;font-size:13px;line-height:13px;color:#222222;letter-spacing:0.079px">Default description.</div><div class="t" style="left:303.50px;top:295px;font-size:13px;line-height:13px;color:#222222;letter-spacing:-1.100px">30</div><div class="t" style="left:659.50px;top:295px;font-size:13px;line-height:13px;color:#222222;letter-spacing:0.125px">admin</div><div class="t" style="left:713.40px;top:295px;font-size:13px;line-height:13px;color:#222222;letter-spacing:-0.643px">DESKTOP-1B13EAN</div><div class="t" style="left:835.60px;top:295px;font-size:13px;line-height:13px;color:#222222;letter-spacing:-0.164px">admin_workspace</div><div class="t" style="left:947.20px;top:295px;font-size:13px;line-height:13px;color:#222222;letter-spacing:-0.168px">2023-11-14 22:16:02.874</div><div class="t" style="left:1097.70px;top:295px;font-size:13px;line-height:13px;color:#222222">Generated by default</div><div class="t" style="left:321.50px;top:319px;font-size:12px;line-height:12px;color:#222222">包含文件:0</div><div class="t" style="left:321.50px;top:342px;font-size:12px;line-height:12px;color:#222222">书架</div><div class="t" style="left:339.50px;top:364px;font-size:13px;line-height:13px;color:#fff;letter-spacing:0.062px">//Read/edit/prefs/userPrefs_3.mel</div><div class="t" style="left:339.50px;top:387px;font-size:13px;line-height:13px;color:#222222;letter-spacing:0.062px">//Read/edit/prefs/userPrefs_4.mel</div><div class="t" style="left:339.50px;top:410px;font-size:13px;line-height:13px;color:#222222;letter-spacing:0.062px">//Read/edit/prefs/userPrefs_5.mel</div><div class="t" style="left:339.50px;top:433px;font-size:13px;line-height:13px;color:#222222;letter-spacing:0.062px">//Read/edit/prefs/userPrefs_6.mel</div><div class="t" style="left:339.50px;top:456px;font-size:13px;line-height:13px;color:#222222;letter-spacing:0.062px">//Read/edit/prefs/userPrefs_7.mel</div><div class="t" style="left:339.50px;top:479px;font-size:13px;line-height:13px;color:#222222;letter-spacing:0.062px">//Read/edit/prefs/userPrefs_8.mel</div><div class="t" style="left:339.50px;top:502px;font-size:13px;line-height:13px;color:#222222;letter-spacing:0.062px">//Read/edit/prefs/userPrefs_9.mel</div><div class="t" style="left:339.50px;top:526px;font-size:12px;line-height:12px;color:#222222">包含文件:7</div><div class="t" style="left:303.50px;top:548px;font-size:13px;line-height:13px;color:#222222;letter-spacing:-1.100px">32</div><div class="t" style="left:659.50px;top:548px;font-size:13px;line-height:13px;color:#222222;letter-spacing:0.125px">admin</div><div class="t" style="left:713.40px;top:548px;font-size:13px;line-height:13px;color:#222222;letter-spacing:-0.643px">DESKTOP-1B13EAN</div><div class="t" style="left:835.60px;top:548px;font-size:13px;line-height:13px;color:#222222;letter-spacing:-0.164px">admin_workspace</div><div class="t" style="left:947.20px;top:548px;font-size:13px;line-height:13px;color:#222222;letter-spacing:-0.168px">2023-11-14 22:16:03.505</div><div class="t" style="left:1096.70px;top:548px;font-size:13px;line-height:13px;color:#222222;letter-spacing:0.079px">Default description.</div><div class="t" style="left:246.60px;top:582px;font-size:12px;line-height:12px;color:#8c8c8c">最大显示数</div><div class="t" style="left:326.00px;top:581px;font-size:13px;line-height:13px;color:#222222;letter-spacing:-0.700px">200</div><div class="t" style="left:506.40px;top:582px;font-size:12px;line-height:12px;color:#8c8c8c">偏移量</div><div class="t" style="left:561.40px;top:581px;font-size:13px;line-height:13px;color:#222222">0</div><div class="t" style="left:8.30px;top:625px;font-size:13px;line-height:13px;color:#222222;letter-spacing:-0.164px">2023-11-14 23:21:14.024</div><div class="t" style="left:165.80px;top:625px;font-size:13px;line-height:13px;color:#222222;letter-spacing:0.118px">//Read/edit/prefs/userPrefs.mel -- unshelved in pending 30</div><div class="t" style="left:8.30px;top:645px;font-size:13px;line-height:13px;color:#222222;letter-spacing:-0.164px">2023-11-14 23:21:14.024</div><div class="t" style="left:165.80px;top:645px;font-size:13px;line-height:13px;color:#222222;letter-spacing:0.083px">//Read/edit/prefs/userPrefs_0.mel -- unshelved in pending 30</div><div class="t" style="left:8.30px;top:665px;font-size:13px;line-height:13px;color:#222222;letter-spacing:-0.164px">2023-11-14 23:21:14.024</div><div class="t" style="left:165.80px;top:665px;font-size:13px;line-height:13px;color:#222222;letter-spacing:0.083px">//Read/edit/prefs/userPrefs_1.mel -- unshelved in pending 30</div><div class="t" style="left:8.30px;top:685px;font-size:13px;line-height:13px;color:#222222;letter-spacing:-0.164px">2023-11-14 23:21:14.024</div><div class="t" style="left:165.80px;top:685px;font-size:13px;line-height:13px;color:#222222;letter-spacing:0.083px">//Read/edit/prefs/userPrefs_2.mel -- unshelved in pending 30</div><div class="t" style="left:8.30px;top:705px;font-size:13px;line-height:13px;color:#222222;letter-spacing:-0.164px">2023-11-14 23:21:14.024</div><div class="t" style="left:164.80px;top:705px;font-size:13px;line-height:13px;color:#222222;letter-spacing:0.090px">unshelved 4 files in pending 30</div>
</body></html>
